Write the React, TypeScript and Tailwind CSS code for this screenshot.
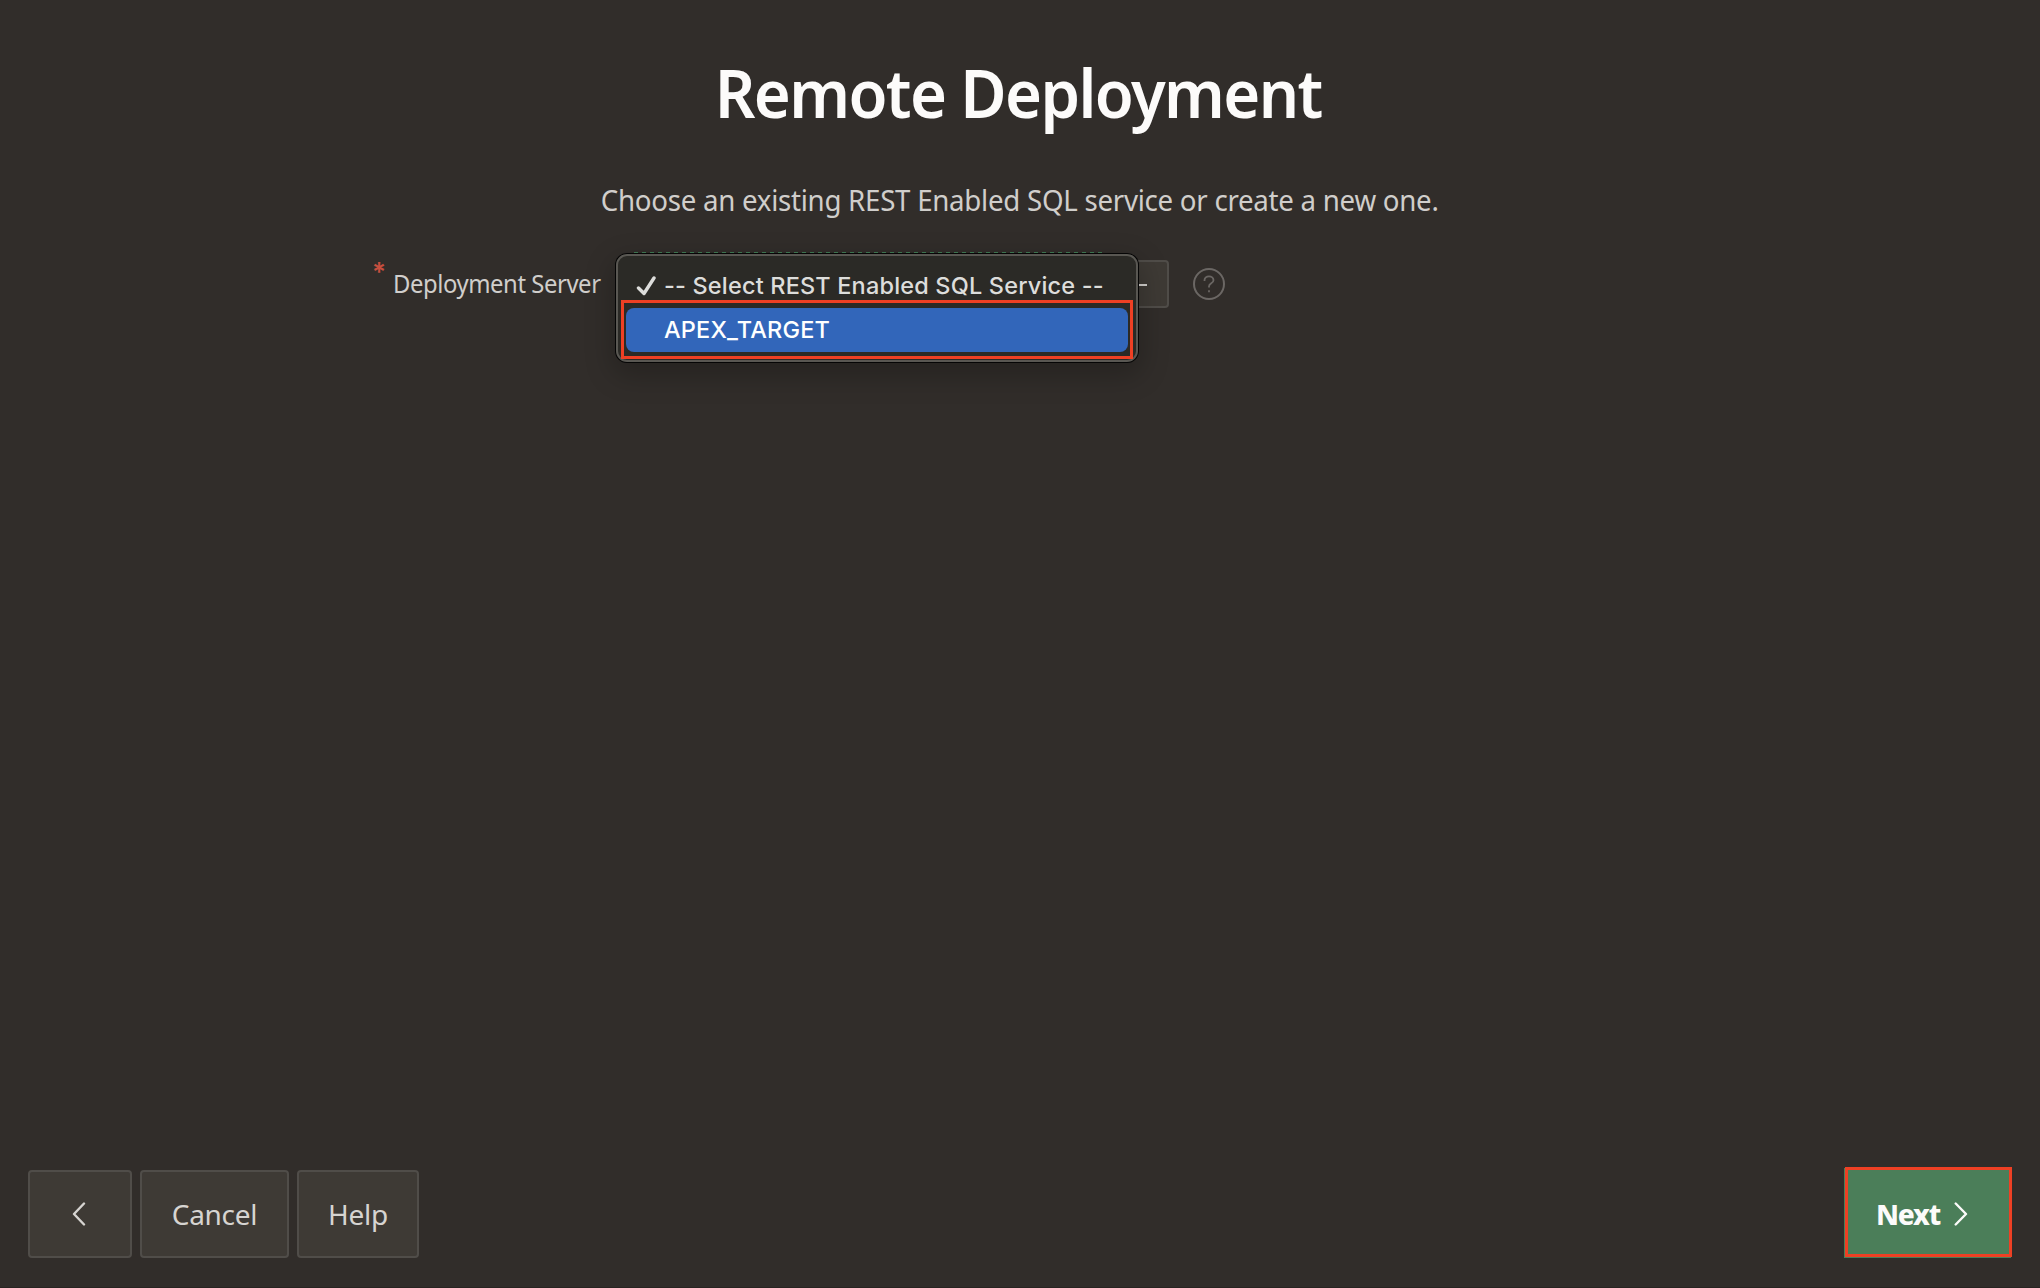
const sans = "font-['Noto_Sans',sans-serif]";

function Chevron({ dir }: { dir: "left" | "right" }) {
  return (
    <svg width="14" height="24" viewBox="0 0 14 24" fill="none" stroke="currentColor" strokeWidth="2.4" strokeLinecap="round" strokeLinejoin="round">
      <path d={dir === "left" ? "M12 1.5L2 12L12 22.5" : "M1.7 1.5L12 12L1.7 22.5"} />
    </svg>
  );
}

const footerButton =
  "flex h-[88px] items-center justify-center rounded-[4px] border-2 border-[#504d49] bg-[#3e3a35] text-[28px] tracking-[-0.3px] text-[#d6d4d1]";

export default function App() {
  return (
    <div className={`flex h-[1288px] w-[2040px] flex-col overflow-hidden border-b border-[#282421] bg-[#312d2a] ${sans}`}>
      <header className="flex flex-col items-center">
        <h1 className="mt-[46px] mr-[3px] flex h-[92px] scale-x-[0.96] items-center whitespace-nowrap text-[66px] font-semibold leading-none tracking-[-1.7px] text-[#fcfbfa]">
          Remote Deployment
        </h1>
        <p className="mt-[41px] flex h-[42px] scale-x-[0.975] items-center whitespace-nowrap text-[28.4px] leading-none tracking-[-0.28px] text-[#d0cecb]">
          Choose an existing REST Enabled SQL service or create a new one.
        </p>
      </header>

      <main className="mt-[31px] flex h-[120px] items-start">
        <span className="ml-[372px] w-[21px] font-['Inter',sans-serif] text-[26px] font-semibold leading-[40px] text-[#c74f3f]">*</span>
        <label className="mt-[16px] w-[223px] origin-left scale-x-[0.97] whitespace-nowrap text-[24.6px] leading-[32px] tracking-[-0.45px] text-[#d0cecb]">
          Deployment Server
        </label>
        <div className="relative mt-[8px] h-[48px] w-[553px] rounded-[4px] border-2 border-[#504d49] bg-[#3e3a35]">
          <span className="absolute right-[20px] top-[22px] h-[2px] w-[9px] bg-[#d0cecb]" />
          <div className="absolute left-[16px] top-[-10px] h-px w-[468px] bg-[repeating-linear-gradient(90deg,#3f7a53_0_4px,transparent_4px_8px)]" />
          <div className="absolute left-[-2px] top-[-8px] h-[108px] w-[522px] rounded-[11px] border-2 border-[#595752] bg-[#2b2a26] font-['Inter',sans-serif] font-medium shadow-[0_0_0_1px_#050505,0_10px_28px_4px_rgba(0,0,0,0.22)]">
            <div className="flex h-[44px] items-center pl-[18px] pt-[16px] text-[23.5px] tracking-[0.17px] text-[#dddddb]">
              <svg className="mr-[8px] shrink-0" width="20" height="20" viewBox="0 0 20 20" fill="none" stroke="currentColor" strokeWidth="3.4" strokeLinecap="round" strokeLinejoin="round">
                <path d="M2.5 12L8 17.5L18 2" />
              </svg>
              <span className="whitespace-nowrap">-- Select REST Enabled SQL Service --</span>
            </div>
            <div className="ml-[3px] h-[59px] w-[512px] border-[3px] border-[#ee4024] px-[2px] pt-[5px]">
              <div className="flex h-[44px] items-center rounded-[8px] bg-[#3266ba] pl-[38px] text-[23.5px] tracking-[0.17px] text-white">
                APEX_TARGET
              </div>
            </div>
          </div>
        </div>
        <span className="ml-[24px] mt-[16px] flex h-8 w-8 items-center justify-center rounded-full border-2 border-[#6b6764] text-[#6b6764]">
          <svg width="12" height="18" viewBox="0 0 12 18" fill="none" stroke="currentColor" strokeWidth="1.8">
            <path d="M1.5 6V5.3C1.5 3 3.5 1.3 6 1.3S10.5 3 10.5 5.2C10.5 8.5 6 8.2 6 11.5V12.6" />
            <path d="M6 15.3V17.3" />
          </svg>
        </span>
      </main>

      <footer className="mt-auto mb-[29px] flex items-end pl-7 pr-7">
        <button className={`${footerButton} w-[104px] pr-[2px]`}>
          <Chevron dir="left" />
        </button>
        <button className={`${footerButton} ml-2 w-[149px]`}>Cancel</button>
        <button className={`${footerButton} ml-2 w-[122px]`}>Help</button>
        <button className="ml-auto mb-[1px] flex h-[90px] w-[167px] items-center border-[3px] border-[#ee4024] bg-[#4b7e59] pl-[28px] pt-[3px] text-[28px] font-extrabold text-[#fcfbfa] shadow-[-1px_1px_0_#4b7e59]">
          <span className="mr-[14px] tracking-[-1.2px]">Next</span>
          <Chevron dir="right" />
        </button>
      </footer>
    </div>
  );
}
